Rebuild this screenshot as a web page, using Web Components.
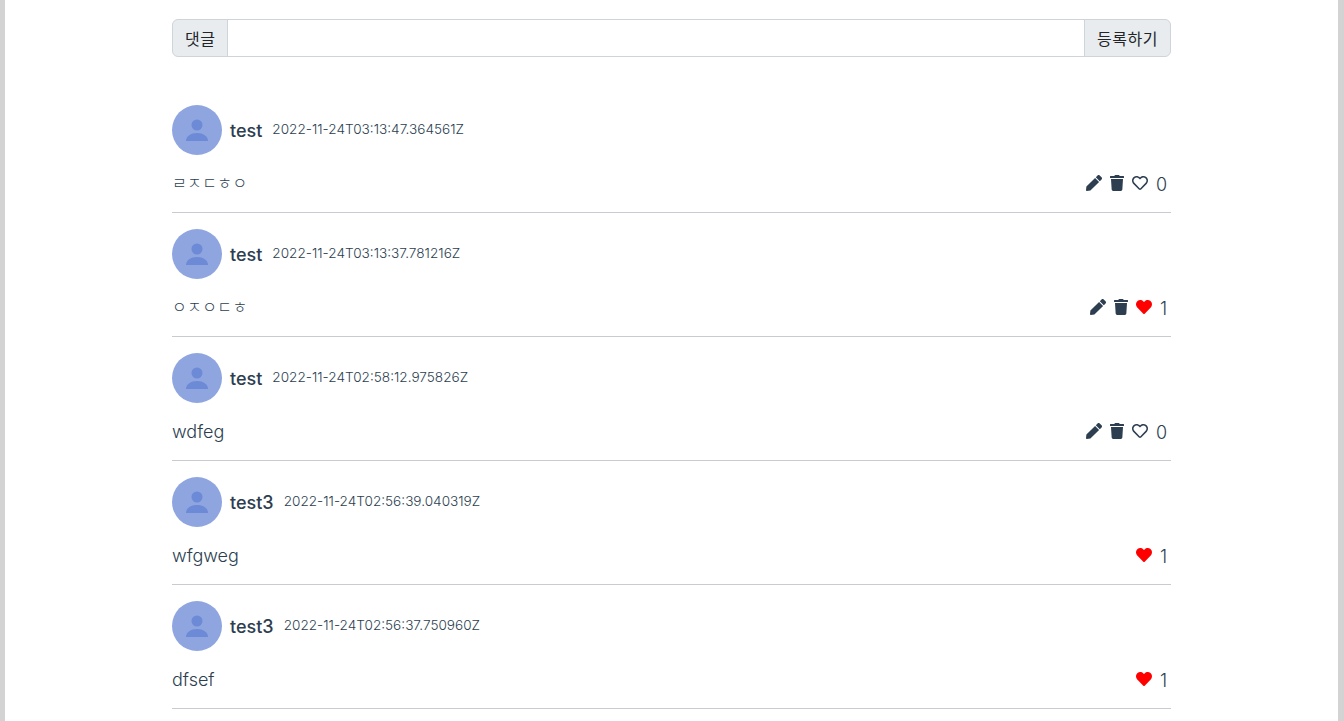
<!DOCTYPE html>
<html lang="ko">
<head>
<meta charset="utf-8">
<title>댓글</title>
<style>
  html, body { margin: 0; background: #d3d3d3; }
  body {
    font-family: Inter, "Noto Sans CJK KR", sans-serif;
    color: #2c3e50;
    overflow: hidden;
  }
</style>
</head>
<body>
<comment-page>
  <comment-form></comment-form>
  <comment-item name="test" date="2022-11-24T03:13:47.364561Z" text="ㄹㅈㄷㅎㅇ" likes="0" mine></comment-item>
  <comment-item name="test" date="2022-11-24T03:13:37.781216Z" text="ㅇㅈㅇㄷㅎ" likes="1" liked mine></comment-item>
  <comment-item name="test" date="2022-11-24T02:58:12.975826Z" text="wdfeg" likes="0" mine></comment-item>
  <comment-item name="test3" date="2022-11-24T02:56:39.040319Z" text="wfgweg" likes="1" liked></comment-item>
  <comment-item name="test3" date="2022-11-24T02:56:37.750960Z" text="dfsef" likes="1" liked></comment-item>
</comment-page>

<script>
const ICONS = {
  pen: ['0 0 512 512', 'M290.74 93.24l128.02 128.02-277.99 277.99-114.14 12.6C11.35 513.54-1.56 500.62.14 485.34l12.7-114.22 277.9-277.88zm207.2-19.06l-60.11-60.11c-18.75-18.75-49.16-18.75-67.91 0l-56.55 56.55 128.02 128.02 56.55-56.55c18.75-18.76 18.75-49.16 0-67.91z'],
  trash: ['0 0 448 512', 'M432 32H312l-9.4-18.7A24 24 0 0 0 281.1 0H166.8a23.72 23.72 0 0 0-21.4 13.3L136 32H16A16 16 0 0 0 0 48v32a16 16 0 0 0 16 16h416a16 16 0 0 0 16-16V48a16 16 0 0 0-16-16zM53.2 467a48 48 0 0 0 47.9 45h245.8a48 48 0 0 0 47.9-45L416 128H32z'],
  heart: ['0 0 512 512', 'M462.3 62.6C407.5 15.9 326 24.3 275.7 76.2L256 96.5l-19.7-20.3C186.1 24.3 104.5 15.9 49.7 62.6c-62.8 53.6-66.1 149.8-9.9 207.9l193.5 199.8c12.5 12.9 32.8 12.9 45.3 0l193.5-199.8c56.3-58.1 53-154.3-9.8-207.9z'],
  heartline: ['0 0 512 512', 'M458.4 64.3C400.6 15.7 311.3 23 256 79.3 200.7 23 111.4 15.6 53.6 64.3-21.6 127.6-10.6 230.8 43 285.5l175.4 178.7c10 10.2 23.4 15.9 37.6 15.9 14.3 0 27.6-5.6 37.6-15.8L469 285.6c53.5-54.7 64.7-157.9-10.6-221.3zm-23.6 187.5L259.4 430.5c-2.4 2.4-4.4 2.4-6.8 0L77.2 251.8c-36.5-37.2-43.9-107.6 7.3-150.7 38.9-32.7 98.9-27.8 136.5 10.5l35 35.7 35-35.7c37.8-38.5 97.8-43.2 136.5-10.6 51.1 43.1 43.5 113.9 7.3 150.8z']
};

class CommentPage extends HTMLElement {
  constructor() {
    super();
    this.attachShadow({ mode: 'open' });
    this.shadowRoot.innerHTML = `
      <style>
        :host {
          display: block;
          margin: 0 6px 0 5px;
          height: 721px;
          background: #fff;
        }
        .container {
          width: 999px;
          margin: 0 auto;
          padding-top: 19px;
        }
      </style>
      <div class="container"><slot></slot></div>
    `;
  }
}

class CommentForm extends HTMLElement {
  constructor() {
    super();
    this.attachShadow({ mode: 'open' });
    this.shadowRoot.innerHTML = `
      <style>
        :host {
          display: flex;
          height: 38px;
          margin-bottom: 32px;
          font-size: 16px;
          color: #212529;
        }
        .label, button {
          display: flex;
          align-items: center;
          box-sizing: border-box;
          padding: 0 12px;
          background: #e9ecef;
          border: 1px solid #ced4da;
          color: inherit;
          font: inherit;
          letter-spacing: .5px;
        }
        .label { border-radius: 6px 0 0 6px; }
        button { border-radius: 0 6px 6px 0; margin-left: -1px; }
        input {
          flex: 1;
          min-width: 0;
          box-sizing: border-box;
          margin-left: -1px;
          border: 1px solid #ced4da;
          background: #fff;
          outline: none;
        }
      </style>
      <span class="label">댓글</span>
      <input type="text">
      <button type="button">등록하기</button>
    `;
  }
}

class IconButton extends HTMLElement {
  constructor() {
    super();
    this.attachShadow({ mode: 'open' });
  }

  connectedCallback() {
    const [box, path] = ICONS[this.getAttribute('icon')];
    this.shadowRoot.innerHTML = `
      <style>
        :host { display: flex; color: inherit; }
        svg { height: 16px; display: block; fill: currentColor; }
      </style>
      <svg viewBox="${box}"><path d="${path}"/></svg>
    `;
  }
}

class CommentItem extends HTMLElement {
  constructor() {
    super();
    this.attachShadow({ mode: 'open' });
  }

  connectedCallback() {
    const mine = this.hasAttribute('mine');
    const liked = this.hasAttribute('liked');
    const text = this.getAttribute('text');
    // 자모만 있는 댓글은 글자가 작게 보임
    const jamo = /[ㄱ-ㅎ]/.test(text);
    this.shadowRoot.innerHTML = `
      <style>
        :host {
          display: block;
          padding: 16px 0;
          border-bottom: 1px solid #c8ccd0;
        }
        .head {
          display: flex;
          align-items: center;
          height: 50px;
        }
        .avatar { width: 50px; height: 50px; display: block; }
        .name {
          margin-left: 8px;
          font-size: 18px;
          font-weight: 500;
          line-height: 27px;
          padding-top: 1px;
        }
        .date {
          margin-left: 10px;
          font-size: 13.6px;
          font-weight: 300;
          margin-top: -2px;
        }
        .body {
          display: flex;
          justify-content: space-between;
          align-items: center;
          height: 27px;
          margin-top: 14px;
          font-size: 18px;
          font-weight: 300;
        }
        .actions {
          display: flex;
          align-items: center;
          gap: 8px;
          padding-right: 4px;
        }
        .heart.on { color: #f00; }
        .text { line-height: 27px; padding-top: 2px; }
        .count { line-height: 27px; padding-top: 2px; margin-bottom: -2px; }
        .text.jamo { font-size: 16px; letter-spacing: .4px; }
      </style>
      <div class="head">
        <svg class="avatar" viewBox="0 0 50 50">
          <circle cx="25" cy="25" r="25" fill="#8fa5e0"/>
          <circle cx="25" cy="20" r="5.5" fill="#6d8ad6"/>
          <path d="M14 36c0-5 5-8 11-8s11 3 11 8z" fill="#6d8ad6"/>
        </svg>
        <span class="name">${this.getAttribute('name')}</span>
        <span class="date">${this.getAttribute('date')}</span>
      </div>
      <div class="body">
        <span class="text ${jamo ? 'jamo' : ''}">${text}</span>
        <span class="actions">
          ${mine ? '<icon-button icon="pen"></icon-button><icon-button icon="trash"></icon-button>' : ''}
          <icon-button class="heart ${liked ? 'on' : ''}" icon="${liked ? 'heart' : 'heartline'}"></icon-button>
          <span class="count">${this.getAttribute('likes')}</span>
        </span>
      </div>
    `;
  }
}

customElements.define('comment-page', CommentPage);
customElements.define('comment-form', CommentForm);
customElements.define('icon-button', IconButton);
customElements.define('comment-item', CommentItem);
</script>
</body>
</html>
